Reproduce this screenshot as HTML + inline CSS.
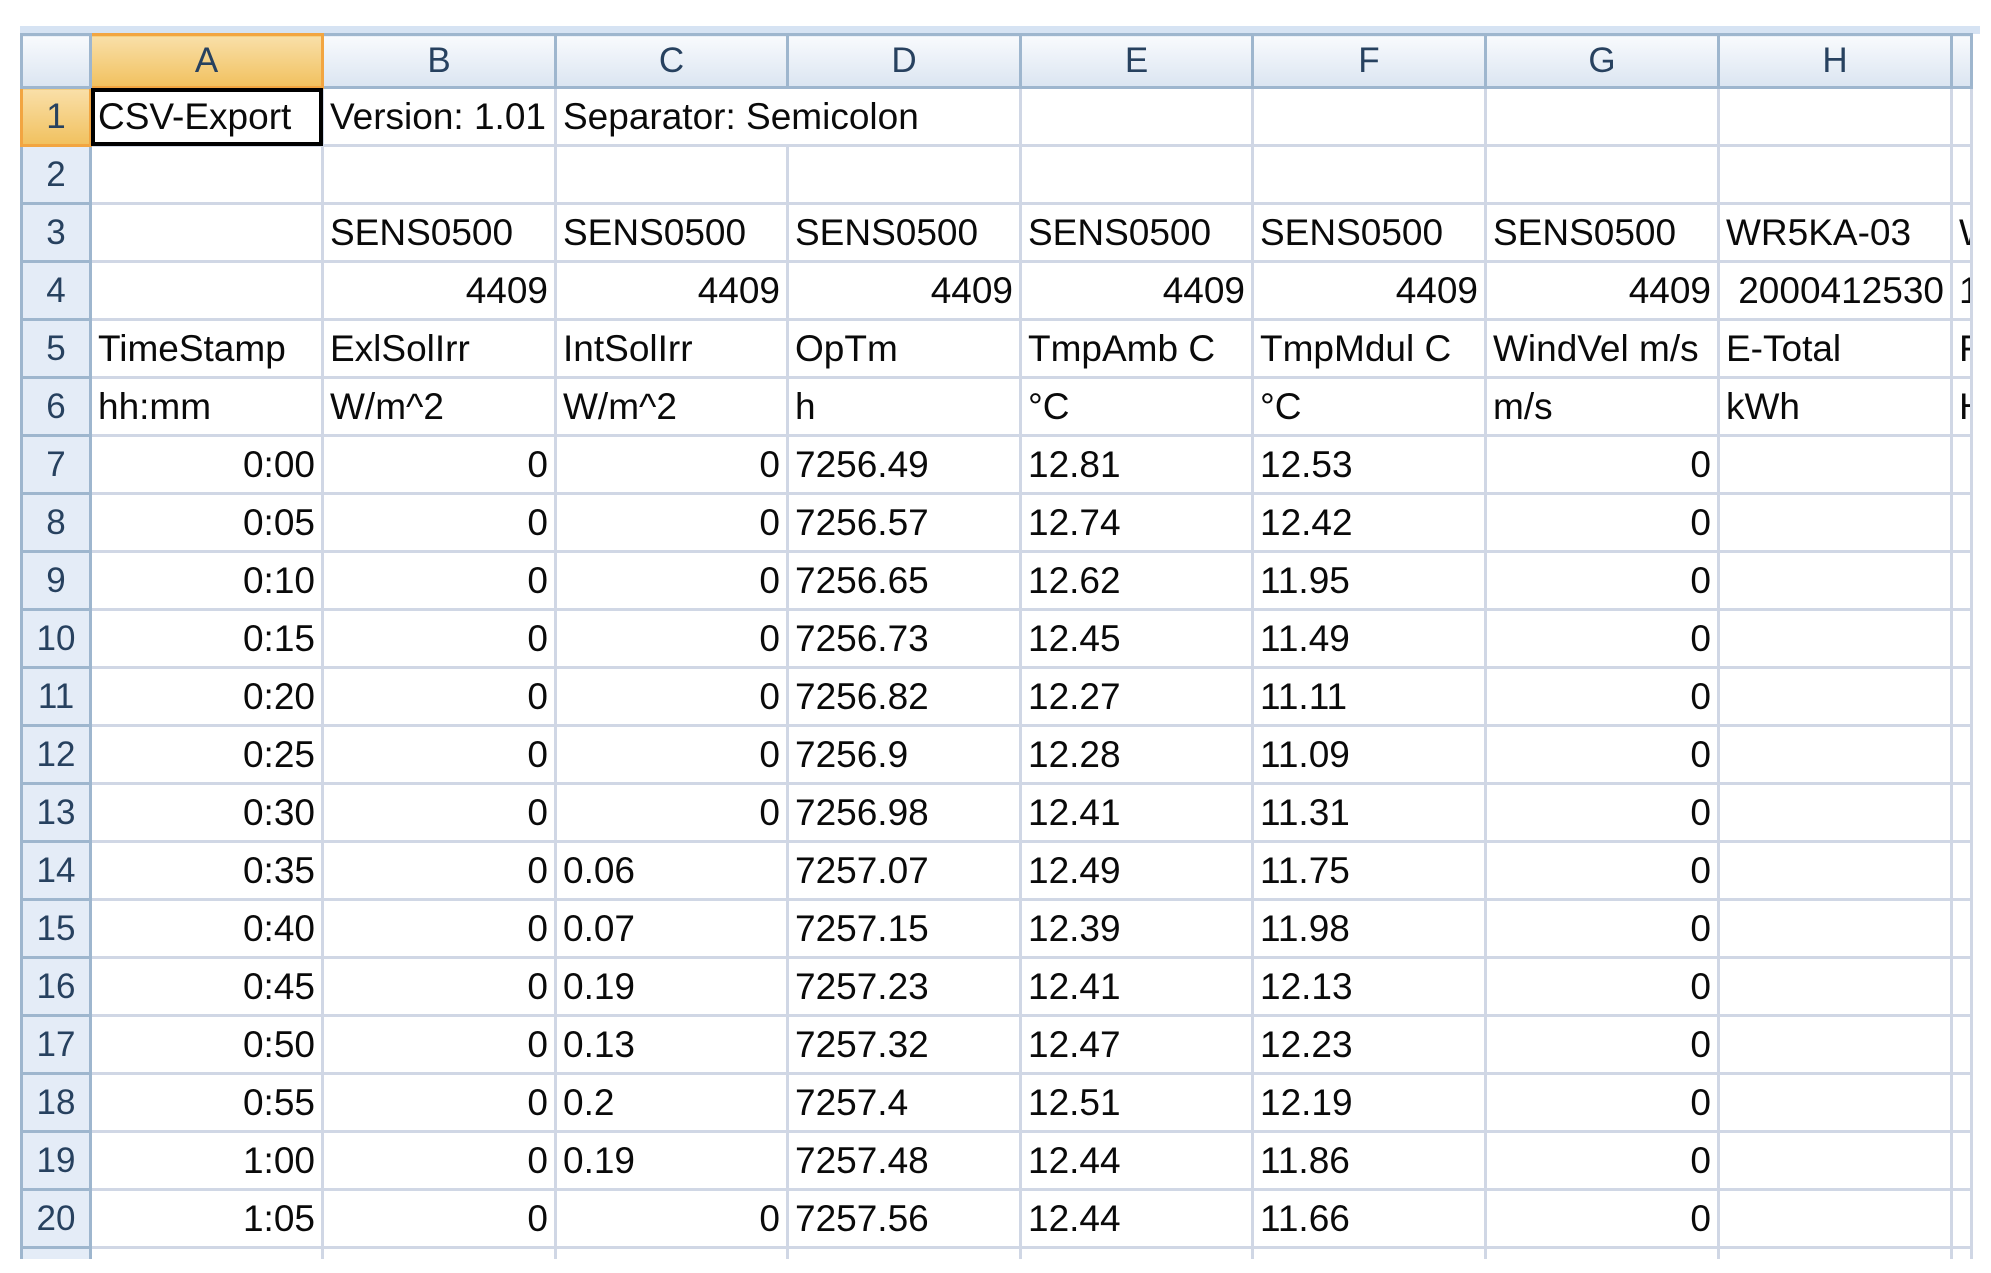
<!DOCTYPE html>
<html><head><meta charset="utf-8"><style>
body{margin:0;width:1991px;height:1273px;background:#fff;overflow:hidden;font-family:"Liberation Sans",sans-serif;}
.band{position:absolute;left:20px;top:26px;width:1960px;height:8px;background:#d6e3f3;}
table{position:absolute;left:20px;top:33px;border-collapse:collapse;table-layout:fixed;width:1950px;}
td{border:3px solid #d0d7e5;height:55px;padding:0 6px;font-size:37px;color:#0a0a0a;white-space:nowrap;overflow:hidden;line-height:55px;}
tr.h td{height:50px;line-height:50px;border-color:#9eb6ce;background:linear-gradient(#f8fafd,#dbe5f1);color:#27415f;text-align:center;font-size:35px;}
td.rh{background:#e4ecf7;border-color:#9eb6ce;color:#27415f;text-align:center;padding:0;font-size:35px;}
tr.h td.sel,td.rh.sel{background:linear-gradient(#f9dfa8,#f1c15f);border-color:#f2a541;}
td.corner{background:#bcd0ea;}
.r{text-align:right;}
.act{outline:4px solid #000;outline-offset:-4px;}
tr.last td{height:10px;line-height:0;font-size:0;border-bottom:none;}
td.clip{padding-right:0;text-overflow:clip;}
</style></head><body>
<div class="band"></div>
<table>
<colgroup><col style="width:69px"><col style="width:232px"><col style="width:233px"><col style="width:232px"><col style="width:233px"><col style="width:232px"><col style="width:233px"><col style="width:233px"><col style="width:233px"><col style="width:20px"></colgroup>
<tr class="h"><td class="corner"></td><td class="sel">A</td><td>B</td><td>C</td><td>D</td><td>E</td><td>F</td><td>G</td><td>H</td><td></td></tr>
<tr><td class="rh sel">1</td><td class="act">CSV-Export</td><td class="clip">Version: 1.01&nbsp;&nbsp;</td><td colspan="2" style="overflow:visible">Separator: Semicolon</td><td></td><td></td><td></td><td></td><td></td></tr>
<tr><td class="rh">2</td><td></td><td></td><td></td><td></td><td></td><td></td><td></td><td></td><td></td></tr>
<tr><td class="rh">3</td><td></td><td>SENS0500</td><td>SENS0500</td><td>SENS0500</td><td>SENS0500</td><td>SENS0500</td><td>SENS0500</td><td>WR5KA-03</td><td>W</td></tr>
<tr><td class="rh">4</td><td></td><td class="r">4409</td><td class="r">4409</td><td class="r">4409</td><td class="r">4409</td><td class="r">4409</td><td class="r">4409</td><td class="r">2000412530</td><td>1</td></tr>
<tr><td class="rh">5</td><td>TimeStamp</td><td>ExlSolIrr</td><td>IntSolIrr</td><td>OpTm</td><td>TmpAmb C</td><td>TmpMdul C</td><td>WindVel m/s</td><td>E-Total</td><td>F</td></tr>
<tr><td class="rh">6</td><td>hh:mm</td><td>W/m^2</td><td>W/m^2</td><td>h</td><td>°C</td><td>°C</td><td>m/s</td><td>kWh</td><td>H</td></tr>
<tr><td class="rh">7</td><td class="r">0:00</td><td class="r">0</td><td class="r">0</td><td>7256.49</td><td>12.81</td><td>12.53</td><td class="r">0</td><td></td><td></td></tr>
<tr><td class="rh">8</td><td class="r">0:05</td><td class="r">0</td><td class="r">0</td><td>7256.57</td><td>12.74</td><td>12.42</td><td class="r">0</td><td></td><td></td></tr>
<tr><td class="rh">9</td><td class="r">0:10</td><td class="r">0</td><td class="r">0</td><td>7256.65</td><td>12.62</td><td>11.95</td><td class="r">0</td><td></td><td></td></tr>
<tr><td class="rh">10</td><td class="r">0:15</td><td class="r">0</td><td class="r">0</td><td>7256.73</td><td>12.45</td><td>11.49</td><td class="r">0</td><td></td><td></td></tr>
<tr><td class="rh">11</td><td class="r">0:20</td><td class="r">0</td><td class="r">0</td><td>7256.82</td><td>12.27</td><td>11.11</td><td class="r">0</td><td></td><td></td></tr>
<tr><td class="rh">12</td><td class="r">0:25</td><td class="r">0</td><td class="r">0</td><td>7256.9</td><td>12.28</td><td>11.09</td><td class="r">0</td><td></td><td></td></tr>
<tr><td class="rh">13</td><td class="r">0:30</td><td class="r">0</td><td class="r">0</td><td>7256.98</td><td>12.41</td><td>11.31</td><td class="r">0</td><td></td><td></td></tr>
<tr><td class="rh">14</td><td class="r">0:35</td><td class="r">0</td><td>0.06</td><td>7257.07</td><td>12.49</td><td>11.75</td><td class="r">0</td><td></td><td></td></tr>
<tr><td class="rh">15</td><td class="r">0:40</td><td class="r">0</td><td>0.07</td><td>7257.15</td><td>12.39</td><td>11.98</td><td class="r">0</td><td></td><td></td></tr>
<tr><td class="rh">16</td><td class="r">0:45</td><td class="r">0</td><td>0.19</td><td>7257.23</td><td>12.41</td><td>12.13</td><td class="r">0</td><td></td><td></td></tr>
<tr><td class="rh">17</td><td class="r">0:50</td><td class="r">0</td><td>0.13</td><td>7257.32</td><td>12.47</td><td>12.23</td><td class="r">0</td><td></td><td></td></tr>
<tr><td class="rh">18</td><td class="r">0:55</td><td class="r">0</td><td>0.2</td><td>7257.4</td><td>12.51</td><td>12.19</td><td class="r">0</td><td></td><td></td></tr>
<tr><td class="rh">19</td><td class="r">1:00</td><td class="r">0</td><td>0.19</td><td>7257.48</td><td>12.44</td><td>11.86</td><td class="r">0</td><td></td><td></td></tr>
<tr><td class="rh">20</td><td class="r">1:05</td><td class="r">0</td><td class="r">0</td><td>7257.56</td><td>12.44</td><td>11.66</td><td class="r">0</td><td></td><td></td></tr>
<tr class="last"><td class="rh"></td><td></td><td></td><td></td><td></td><td></td><td></td><td></td><td></td><td></td></tr>
</table>
</body></html>
